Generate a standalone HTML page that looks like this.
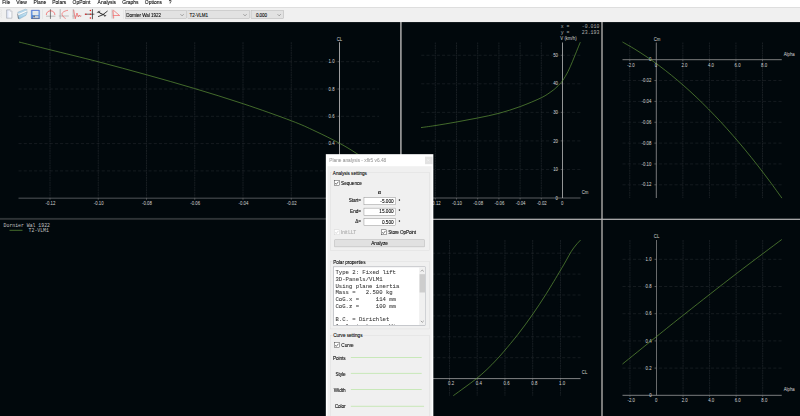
<!DOCTYPE html>
<html><head><meta charset="utf-8"><title>xflr5 v6.48</title>
<style>
html,body{margin:0;padding:0;overflow:hidden;}
body{width:800px;height:416px;overflow:hidden;background:#01080c;font-family:"Liberation Sans", "DejaVu Sans", sans-serif;position:relative;}
#g{position:absolute;left:0;top:0;}
#g text{font-family:"Liberation Sans", "DejaVu Sans", sans-serif;}
#g text.m{font-family:"Liberation Mono", "DejaVu Sans Mono", monospace;letter-spacing:0;}

#ui{position:absolute;left:0;top:0;width:1920px;height:998.4px;transform:scale(0.4166667);transform-origin:0 0;font-size:11.3px;color:#000;-webkit-text-stroke-width:0.18px;}
#ui .a{position:absolute;}
#ui .t{position:absolute;white-space:nowrap;line-height:16px;height:16px;letter-spacing:-0.15px;}
#ui .gb{position:absolute;border:1px solid #dadada;box-sizing:border-box;}
#ui .fld{position:absolute;background:#fff;border:1px solid #7a7a7a;box-sizing:border-box;text-align:right;line-height:16.6px;padding-right:4px;}
#ui .cb{position:absolute;width:13px;height:13px;background:#fff;border:1px solid #333;box-sizing:border-box;}
#ui .cb svg{position:absolute;left:-1px;top:-1px;}
#ui .btn{position:absolute;background:#e1e1e1;border:1px solid #adadad;box-sizing:border-box;text-align:center;line-height:17.8px;}
#ui .combo{position:absolute;background:#e2e2e2;border:1px solid #adadad;box-sizing:border-box;line-height:21.5px;white-space:nowrap;letter-spacing:-0.12px;font-size:11px;}
#ui .combo .arr{position:absolute;right:5px;top:7px;left:auto;}
#ui .mono{font-family:"Liberation Mono","DejaVu Sans Mono",monospace;font-size:13.45px;line-height:16.1px;color:#3a3a3a;white-space:pre;}

</style></head><body>
<svg id="g" width="800" height="416" viewBox="0 0 800 416">
<rect x="0" y="21.6" width="800" height="395" fill="#01080c"/>
<line x1="291.25" y1="42.20" x2="291.25" y2="198.20" stroke="#282e32" stroke-width="0.6" stroke-dasharray="1.9 0.55"/>
<line x1="243.00" y1="42.20" x2="243.00" y2="198.20" stroke="#282e32" stroke-width="0.6" stroke-dasharray="1.9 0.55"/>
<line x1="194.75" y1="42.20" x2="194.75" y2="198.20" stroke="#282e32" stroke-width="0.6" stroke-dasharray="1.9 0.55"/>
<line x1="146.50" y1="42.20" x2="146.50" y2="198.20" stroke="#282e32" stroke-width="0.6" stroke-dasharray="1.9 0.55"/>
<line x1="98.25" y1="42.20" x2="98.25" y2="198.20" stroke="#282e32" stroke-width="0.6" stroke-dasharray="1.9 0.55"/>
<line x1="50.00" y1="42.20" x2="50.00" y2="198.20" stroke="#282e32" stroke-width="0.6" stroke-dasharray="1.9 0.55"/>
<line x1="18.50" y1="170.90" x2="379.00" y2="170.90" stroke="#23292d" stroke-width="0.6" stroke-dasharray="3.1 2.1"/>
<line x1="18.50" y1="143.60" x2="379.00" y2="143.60" stroke="#23292d" stroke-width="0.6" stroke-dasharray="3.1 2.1"/>
<line x1="18.50" y1="116.30" x2="379.00" y2="116.30" stroke="#23292d" stroke-width="0.6" stroke-dasharray="3.1 2.1"/>
<line x1="18.50" y1="89.00" x2="379.00" y2="89.00" stroke="#23292d" stroke-width="0.6" stroke-dasharray="3.1 2.1"/>
<line x1="18.50" y1="61.70" x2="379.00" y2="61.70" stroke="#23292d" stroke-width="0.6" stroke-dasharray="3.1 2.1"/>
<line x1="18.50" y1="198.20" x2="379.00" y2="198.20" stroke="#363b3f" stroke-width="1.5"/>
<line x1="339.50" y1="42.20" x2="339.50" y2="198.20" stroke="#b0b0b0" stroke-width="0.9"/>
<line x1="291.25" y1="198.20" x2="291.25" y2="199.80" stroke="#8a8a8a" stroke-width="0.5"/>
<line x1="243.00" y1="198.20" x2="243.00" y2="199.80" stroke="#8a8a8a" stroke-width="0.5"/>
<line x1="194.75" y1="198.20" x2="194.75" y2="199.80" stroke="#8a8a8a" stroke-width="0.5"/>
<line x1="146.50" y1="198.20" x2="146.50" y2="199.80" stroke="#8a8a8a" stroke-width="0.5"/>
<line x1="98.25" y1="198.20" x2="98.25" y2="199.80" stroke="#8a8a8a" stroke-width="0.5"/>
<line x1="50.00" y1="198.20" x2="50.00" y2="199.80" stroke="#8a8a8a" stroke-width="0.5"/>
<line x1="337.70" y1="170.90" x2="339.50" y2="170.90" stroke="#8a8a8a" stroke-width="0.5"/>
<line x1="337.70" y1="143.60" x2="339.50" y2="143.60" stroke="#8a8a8a" stroke-width="0.5"/>
<line x1="337.70" y1="116.30" x2="339.50" y2="116.30" stroke="#8a8a8a" stroke-width="0.5"/>
<line x1="337.70" y1="89.00" x2="339.50" y2="89.00" stroke="#8a8a8a" stroke-width="0.5"/>
<line x1="337.70" y1="61.70" x2="339.50" y2="61.70" stroke="#8a8a8a" stroke-width="0.5"/>
<text transform="translate(291.75 204.75) scale(0.88 1)" font-size="4.9" text-anchor="middle" fill="#d8d8d8">-0.02</text>
<text transform="translate(243.50 204.75) scale(0.88 1)" font-size="4.9" text-anchor="middle" fill="#d8d8d8">-0.04</text>
<text transform="translate(195.25 204.75) scale(0.88 1)" font-size="4.9" text-anchor="middle" fill="#d8d8d8">-0.06</text>
<text transform="translate(147.00 204.75) scale(0.88 1)" font-size="4.9" text-anchor="middle" fill="#d8d8d8">-0.08</text>
<text transform="translate(98.75 204.75) scale(0.88 1)" font-size="4.9" text-anchor="middle" fill="#d8d8d8">-0.10</text>
<text transform="translate(50.50 204.75) scale(0.88 1)" font-size="4.9" text-anchor="middle" fill="#d8d8d8">-0.12</text>
<text transform="translate(334.60 172.50) scale(0.88 1)" font-size="4.9" text-anchor="end" fill="#d8d8d8">0.2</text>
<text transform="translate(334.60 145.20) scale(0.88 1)" font-size="4.9" text-anchor="end" fill="#d8d8d8">0.4</text>
<text transform="translate(334.60 117.90) scale(0.88 1)" font-size="4.9" text-anchor="end" fill="#d8d8d8">0.6</text>
<text transform="translate(334.60 90.60) scale(0.88 1)" font-size="4.9" text-anchor="end" fill="#d8d8d8">0.8</text>
<text transform="translate(334.60 63.30) scale(0.88 1)" font-size="4.9" text-anchor="end" fill="#d8d8d8">1.0</text>
<text transform="translate(339.40 40.50) scale(0.88 1)" font-size="4.9" text-anchor="middle" fill="#d8d8d8">CL</text>
<path d="M19.00,42.00 C24.17,43.29 36.79,46.46 50.00,49.75 C63.21,53.04 82.17,57.58 98.25,61.75 C114.33,65.92 130.46,70.29 146.50,74.75 C162.54,79.21 178.38,83.67 194.50,88.50 C210.62,93.33 227.12,98.38 243.25,103.75 C259.38,109.12 279.29,116.21 291.25,120.75 C303.21,125.29 306.96,127.25 315.00,131.00 C323.04,134.75 332.62,139.54 339.50,143.25 C346.38,146.96 349.67,148.96 356.25,153.25 C362.83,157.54 375.21,166.38 379.00,169.00" fill="none" stroke="#62983a" stroke-width="0.68"/>
<line x1="541.30" y1="42.50" x2="541.30" y2="198.00" stroke="#282e32" stroke-width="0.6" stroke-dasharray="1.9 0.55"/>
<line x1="520.10" y1="42.50" x2="520.10" y2="198.00" stroke="#282e32" stroke-width="0.6" stroke-dasharray="1.9 0.55"/>
<line x1="498.90" y1="42.50" x2="498.90" y2="198.00" stroke="#282e32" stroke-width="0.6" stroke-dasharray="1.9 0.55"/>
<line x1="477.70" y1="42.50" x2="477.70" y2="198.00" stroke="#282e32" stroke-width="0.6" stroke-dasharray="1.9 0.55"/>
<line x1="456.50" y1="42.50" x2="456.50" y2="198.00" stroke="#282e32" stroke-width="0.6" stroke-dasharray="1.9 0.55"/>
<line x1="435.30" y1="42.50" x2="435.30" y2="198.00" stroke="#282e32" stroke-width="0.6" stroke-dasharray="1.9 0.55"/>
<line x1="421.25" y1="169.45" x2="580.50" y2="169.45" stroke="#23292d" stroke-width="0.6" stroke-dasharray="3.1 2.1"/>
<line x1="421.25" y1="140.90" x2="580.50" y2="140.90" stroke="#23292d" stroke-width="0.6" stroke-dasharray="3.1 2.1"/>
<line x1="421.25" y1="112.35" x2="580.50" y2="112.35" stroke="#23292d" stroke-width="0.6" stroke-dasharray="3.1 2.1"/>
<line x1="421.25" y1="83.80" x2="580.50" y2="83.80" stroke="#23292d" stroke-width="0.6" stroke-dasharray="3.1 2.1"/>
<line x1="421.25" y1="55.25" x2="580.50" y2="55.25" stroke="#23292d" stroke-width="0.6" stroke-dasharray="3.1 2.1"/>
<line x1="421.25" y1="198.00" x2="580.50" y2="198.00" stroke="#3c4144" stroke-width="1.5"/>
<line x1="562.50" y1="42.50" x2="562.50" y2="198.00" stroke="#c4c4c4" stroke-width="0.75"/>
<line x1="541.30" y1="198.00" x2="541.30" y2="199.60" stroke="#8a8a8a" stroke-width="0.5"/>
<line x1="520.10" y1="198.00" x2="520.10" y2="199.60" stroke="#8a8a8a" stroke-width="0.5"/>
<line x1="498.90" y1="198.00" x2="498.90" y2="199.60" stroke="#8a8a8a" stroke-width="0.5"/>
<line x1="477.70" y1="198.00" x2="477.70" y2="199.60" stroke="#8a8a8a" stroke-width="0.5"/>
<line x1="456.50" y1="198.00" x2="456.50" y2="199.60" stroke="#8a8a8a" stroke-width="0.5"/>
<line x1="435.30" y1="198.00" x2="435.30" y2="199.60" stroke="#8a8a8a" stroke-width="0.5"/>
<line x1="560.70" y1="169.45" x2="562.50" y2="169.45" stroke="#8a8a8a" stroke-width="0.5"/>
<line x1="560.70" y1="140.90" x2="562.50" y2="140.90" stroke="#8a8a8a" stroke-width="0.5"/>
<line x1="560.70" y1="112.35" x2="562.50" y2="112.35" stroke="#8a8a8a" stroke-width="0.5"/>
<line x1="560.70" y1="83.80" x2="562.50" y2="83.80" stroke="#8a8a8a" stroke-width="0.5"/>
<line x1="560.70" y1="55.25" x2="562.50" y2="55.25" stroke="#8a8a8a" stroke-width="0.5"/>
<text transform="translate(541.80 204.85) scale(0.88 1)" font-size="4.9" text-anchor="middle" fill="#d8d8d8">-0.02</text>
<text transform="translate(520.60 204.85) scale(0.88 1)" font-size="4.9" text-anchor="middle" fill="#d8d8d8">-0.04</text>
<text transform="translate(499.40 204.85) scale(0.88 1)" font-size="4.9" text-anchor="middle" fill="#d8d8d8">-0.06</text>
<text transform="translate(478.20 204.85) scale(0.88 1)" font-size="4.9" text-anchor="middle" fill="#d8d8d8">-0.08</text>
<text transform="translate(457.00 204.85) scale(0.88 1)" font-size="4.9" text-anchor="middle" fill="#d8d8d8">-0.10</text>
<text transform="translate(435.80 204.85) scale(0.88 1)" font-size="4.9" text-anchor="middle" fill="#d8d8d8">-0.12</text>
<text transform="translate(562.10 204.85) scale(0.88 1)" font-size="4.9" text-anchor="middle" fill="#d8d8d8">0</text>
<text transform="translate(558.00 171.05) scale(0.88 1)" font-size="4.9" text-anchor="end" fill="#d8d8d8">10</text>
<text transform="translate(558.00 142.50) scale(0.88 1)" font-size="4.9" text-anchor="end" fill="#d8d8d8">20</text>
<text transform="translate(558.00 113.95) scale(0.88 1)" font-size="4.9" text-anchor="end" fill="#d8d8d8">30</text>
<text transform="translate(558.00 85.40) scale(0.88 1)" font-size="4.9" text-anchor="end" fill="#d8d8d8">40</text>
<text transform="translate(558.00 56.85) scale(0.88 1)" font-size="4.9" text-anchor="end" fill="#d8d8d8">50</text>
<text transform="translate(558.00 199.60) scale(0.88 1)" font-size="4.9" text-anchor="end" fill="#d8d8d8">0</text>
<text transform="translate(585.10 193.70) scale(0.88 1)" font-size="4.9" text-anchor="middle" fill="#d8d8d8">Cm</text>
<text transform="translate(568.50 40.00) scale(0.88 1)" font-size="4.9" text-anchor="middle" fill="#d8d8d8">V (km/h)</text>
<path d="M421.00,127.60 C423.33,127.27 429.10,126.53 435.00,125.60 C440.90,124.67 449.30,123.27 456.40,122.00 C463.50,120.73 470.50,119.45 477.60,118.00 C484.70,116.55 491.87,115.22 499.00,113.30 C506.13,111.38 513.30,109.12 520.40,106.50 C527.50,103.88 536.33,100.18 541.60,97.60 C546.87,95.02 549.43,92.80 552.00,91.00 C554.57,89.20 555.25,88.50 557.00,86.80 C558.75,85.10 560.67,83.35 562.50,80.80 C564.33,78.25 566.33,74.73 568.00,71.50 C569.67,68.27 571.08,64.73 572.50,61.40 C573.92,58.07 575.20,54.70 576.50,51.50 C577.80,48.30 579.67,43.75 580.30,42.20" fill="none" stroke="#62983a" stroke-width="0.68"/>
<text class="m" x="560.75" y="28.00" font-size="4.85" text-anchor="start" fill="#b0b0b0">x =</text>
<text class="m" x="599.30" y="28.00" font-size="4.85" text-anchor="end" fill="#b0b0b0">-0.010</text>
<text class="m" x="560.75" y="34.20" font-size="4.85" text-anchor="start" fill="#b0b0b0">y =</text>
<text class="m" x="599.30" y="34.20" font-size="4.85" text-anchor="end" fill="#b0b0b0">23.193</text>
<line x1="629.75" y1="42.50" x2="629.75" y2="198.00" stroke="#282e32" stroke-width="0.6" stroke-dasharray="1.9 0.55"/>
<line x1="682.85" y1="42.50" x2="682.85" y2="198.00" stroke="#282e32" stroke-width="0.6" stroke-dasharray="1.9 0.55"/>
<line x1="709.40" y1="42.50" x2="709.40" y2="198.00" stroke="#282e32" stroke-width="0.6" stroke-dasharray="1.9 0.55"/>
<line x1="735.95" y1="42.50" x2="735.95" y2="198.00" stroke="#282e32" stroke-width="0.6" stroke-dasharray="1.9 0.55"/>
<line x1="762.50" y1="42.50" x2="762.50" y2="198.00" stroke="#282e32" stroke-width="0.6" stroke-dasharray="1.9 0.55"/>
<line x1="622.50" y1="80.55" x2="781.75" y2="80.55" stroke="#23292d" stroke-width="0.6" stroke-dasharray="3.1 2.1"/>
<line x1="622.50" y1="101.40" x2="781.75" y2="101.40" stroke="#23292d" stroke-width="0.6" stroke-dasharray="3.1 2.1"/>
<line x1="622.50" y1="122.25" x2="781.75" y2="122.25" stroke="#23292d" stroke-width="0.6" stroke-dasharray="3.1 2.1"/>
<line x1="622.50" y1="143.10" x2="781.75" y2="143.10" stroke="#23292d" stroke-width="0.6" stroke-dasharray="3.1 2.1"/>
<line x1="622.50" y1="163.95" x2="781.75" y2="163.95" stroke="#23292d" stroke-width="0.6" stroke-dasharray="3.1 2.1"/>
<line x1="622.50" y1="184.80" x2="781.75" y2="184.80" stroke="#23292d" stroke-width="0.6" stroke-dasharray="3.1 2.1"/>
<line x1="622.50" y1="59.70" x2="781.75" y2="59.70" stroke="#8a8a8a" stroke-width="0.9"/>
<line x1="656.30" y1="42.50" x2="656.30" y2="198.00" stroke="#959595" stroke-width="0.8"/>
<line x1="629.75" y1="59.70" x2="629.75" y2="61.30" stroke="#8a8a8a" stroke-width="0.5"/>
<line x1="682.85" y1="59.70" x2="682.85" y2="61.30" stroke="#8a8a8a" stroke-width="0.5"/>
<line x1="709.40" y1="59.70" x2="709.40" y2="61.30" stroke="#8a8a8a" stroke-width="0.5"/>
<line x1="735.95" y1="59.70" x2="735.95" y2="61.30" stroke="#8a8a8a" stroke-width="0.5"/>
<line x1="762.50" y1="59.70" x2="762.50" y2="61.30" stroke="#8a8a8a" stroke-width="0.5"/>
<line x1="654.50" y1="80.55" x2="656.30" y2="80.55" stroke="#8a8a8a" stroke-width="0.5"/>
<line x1="654.50" y1="101.40" x2="656.30" y2="101.40" stroke="#8a8a8a" stroke-width="0.5"/>
<line x1="654.50" y1="122.25" x2="656.30" y2="122.25" stroke="#8a8a8a" stroke-width="0.5"/>
<line x1="654.50" y1="143.10" x2="656.30" y2="143.10" stroke="#8a8a8a" stroke-width="0.5"/>
<line x1="654.50" y1="163.95" x2="656.30" y2="163.95" stroke="#8a8a8a" stroke-width="0.5"/>
<line x1="654.50" y1="184.80" x2="656.30" y2="184.80" stroke="#8a8a8a" stroke-width="0.5"/>
<text transform="translate(631.05 66.85) scale(0.88 1)" font-size="4.9" text-anchor="middle" fill="#d8d8d8">-2.0</text>
<text transform="translate(655.90 66.85) scale(0.88 1)" font-size="4.9" text-anchor="middle" fill="#d8d8d8">0</text>
<text transform="translate(684.45 66.85) scale(0.88 1)" font-size="4.9" text-anchor="middle" fill="#d8d8d8">2.0</text>
<text transform="translate(711.00 66.85) scale(0.88 1)" font-size="4.9" text-anchor="middle" fill="#d8d8d8">4.0</text>
<text transform="translate(737.55 66.85) scale(0.88 1)" font-size="4.9" text-anchor="middle" fill="#d8d8d8">6.0</text>
<text transform="translate(764.10 66.85) scale(0.88 1)" font-size="4.9" text-anchor="middle" fill="#d8d8d8">8.0</text>
<text transform="translate(651.40 61.30) scale(0.88 1)" font-size="4.9" text-anchor="end" fill="#d8d8d8">0</text>
<text transform="translate(651.40 82.15) scale(0.88 1)" font-size="4.9" text-anchor="end" fill="#d8d8d8">-0.02</text>
<text transform="translate(651.40 103.00) scale(0.88 1)" font-size="4.9" text-anchor="end" fill="#d8d8d8">-0.04</text>
<text transform="translate(651.40 123.85) scale(0.88 1)" font-size="4.9" text-anchor="end" fill="#d8d8d8">-0.06</text>
<text transform="translate(651.40 144.70) scale(0.88 1)" font-size="4.9" text-anchor="end" fill="#d8d8d8">-0.08</text>
<text transform="translate(651.40 165.55) scale(0.88 1)" font-size="4.9" text-anchor="end" fill="#d8d8d8">-0.10</text>
<text transform="translate(651.40 186.40) scale(0.88 1)" font-size="4.9" text-anchor="end" fill="#d8d8d8">-0.12</text>
<text transform="translate(789.20 55.80) scale(0.88 1)" font-size="4.9" text-anchor="middle" fill="#d8d8d8">Alpha</text>
<text transform="translate(657.00 40.50) scale(0.88 1)" font-size="4.9" text-anchor="middle" fill="#d8d8d8">Cm</text>
<path d="M622.50,42.00 C624.54,43.19 630.67,46.61 634.76,49.12 C638.85,51.63 642.93,54.27 647.02,57.05 C651.11,59.83 655.19,62.75 659.28,65.80 C663.37,68.85 667.46,72.04 671.55,75.36 C675.64,78.68 679.72,82.14 683.81,85.74 C687.90,89.33 691.98,93.06 696.07,96.93 C700.16,100.80 704.24,104.80 708.33,108.94 C712.42,113.08 716.50,117.35 720.59,121.76 C724.68,126.17 728.76,130.72 732.85,135.40 C736.94,140.08 741.03,144.90 745.12,149.85 C749.21,154.80 753.29,159.90 757.38,165.12 C761.47,170.34 765.55,175.70 769.64,181.20 C773.73,186.70 779.86,195.28 781.90,198.10" fill="none" stroke="#62983a" stroke-width="0.68"/>
<line x1="449.45" y1="240.00" x2="449.45" y2="395.70" stroke="#282e32" stroke-width="0.6" stroke-dasharray="1.9 0.55"/>
<line x1="477.20" y1="240.00" x2="477.20" y2="395.70" stroke="#282e32" stroke-width="0.6" stroke-dasharray="1.9 0.55"/>
<line x1="504.95" y1="240.00" x2="504.95" y2="395.70" stroke="#282e32" stroke-width="0.6" stroke-dasharray="1.9 0.55"/>
<line x1="532.70" y1="240.00" x2="532.70" y2="395.70" stroke="#282e32" stroke-width="0.6" stroke-dasharray="1.9 0.55"/>
<line x1="560.45" y1="240.00" x2="560.45" y2="395.70" stroke="#282e32" stroke-width="0.6" stroke-dasharray="1.9 0.55"/>
<line x1="421.70" y1="357.70" x2="580.50" y2="357.70" stroke="#23292d" stroke-width="0.6" stroke-dasharray="3.1 2.1"/>
<line x1="421.70" y1="336.80" x2="580.50" y2="336.80" stroke="#23292d" stroke-width="0.6" stroke-dasharray="3.1 2.1"/>
<line x1="421.70" y1="315.90" x2="580.50" y2="315.90" stroke="#23292d" stroke-width="0.6" stroke-dasharray="3.1 2.1"/>
<line x1="421.70" y1="295.00" x2="580.50" y2="295.00" stroke="#23292d" stroke-width="0.6" stroke-dasharray="3.1 2.1"/>
<line x1="421.70" y1="274.10" x2="580.50" y2="274.10" stroke="#23292d" stroke-width="0.6" stroke-dasharray="3.1 2.1"/>
<line x1="421.70" y1="253.20" x2="580.50" y2="253.20" stroke="#23292d" stroke-width="0.6" stroke-dasharray="3.1 2.1"/>
<line x1="421.70" y1="378.60" x2="580.50" y2="378.60" stroke="#b8b8b8" stroke-width="0.7"/>
<line x1="421.70" y1="240.00" x2="421.70" y2="395.70" stroke="#a8a8a8" stroke-width="0.9"/>
<line x1="449.45" y1="378.60" x2="449.45" y2="380.20" stroke="#8a8a8a" stroke-width="0.5"/>
<line x1="477.20" y1="378.60" x2="477.20" y2="380.20" stroke="#8a8a8a" stroke-width="0.5"/>
<line x1="504.95" y1="378.60" x2="504.95" y2="380.20" stroke="#8a8a8a" stroke-width="0.5"/>
<line x1="532.70" y1="378.60" x2="532.70" y2="380.20" stroke="#8a8a8a" stroke-width="0.5"/>
<line x1="560.45" y1="378.60" x2="560.45" y2="380.20" stroke="#8a8a8a" stroke-width="0.5"/>
<line x1="419.90" y1="357.70" x2="421.70" y2="357.70" stroke="#8a8a8a" stroke-width="0.5"/>
<line x1="419.90" y1="336.80" x2="421.70" y2="336.80" stroke="#8a8a8a" stroke-width="0.5"/>
<line x1="419.90" y1="315.90" x2="421.70" y2="315.90" stroke="#8a8a8a" stroke-width="0.5"/>
<line x1="419.90" y1="295.00" x2="421.70" y2="295.00" stroke="#8a8a8a" stroke-width="0.5"/>
<line x1="419.90" y1="274.10" x2="421.70" y2="274.10" stroke="#8a8a8a" stroke-width="0.5"/>
<line x1="419.90" y1="253.20" x2="421.70" y2="253.20" stroke="#8a8a8a" stroke-width="0.5"/>
<text transform="translate(451.05 385.05) scale(0.88 1)" font-size="4.9" text-anchor="middle" fill="#d8d8d8">0.2</text>
<text transform="translate(478.80 385.05) scale(0.88 1)" font-size="4.9" text-anchor="middle" fill="#d8d8d8">0.4</text>
<text transform="translate(506.55 385.05) scale(0.88 1)" font-size="4.9" text-anchor="middle" fill="#d8d8d8">0.6</text>
<text transform="translate(534.30 385.05) scale(0.88 1)" font-size="4.9" text-anchor="middle" fill="#d8d8d8">0.8</text>
<text transform="translate(562.05 385.05) scale(0.88 1)" font-size="4.9" text-anchor="middle" fill="#d8d8d8">1.0</text>
<text transform="translate(584.60 374.00) scale(0.88 1)" font-size="4.9" text-anchor="middle" fill="#d8d8d8">CL</text>
<path d="M453.30,395.70 C455.25,394.28 461.13,390.05 465.00,387.20 C468.87,384.35 472.83,381.57 476.50,378.60 C480.17,375.63 483.71,372.50 487.00,369.40 C490.29,366.30 493.42,363.02 496.25,360.00 C499.08,356.98 500.38,355.58 504.00,351.30 C507.62,347.02 513.30,340.35 518.00,334.30 C522.70,328.25 527.49,321.75 532.20,315.00 C536.91,308.25 541.57,301.20 546.25,293.80 C550.93,286.40 557.01,276.10 560.30,270.60 C563.59,265.10 564.17,263.98 566.00,260.80 C567.83,257.62 569.58,254.13 571.25,251.50 C572.92,248.87 574.44,246.92 576.00,245.00 C577.56,243.08 579.83,240.83 580.60,240.00" fill="none" stroke="#62983a" stroke-width="0.68"/>
<line x1="629.95" y1="240.00" x2="629.95" y2="395.30" stroke="#282e32" stroke-width="0.6" stroke-dasharray="1.9 0.55"/>
<line x1="683.05" y1="240.00" x2="683.05" y2="395.30" stroke="#282e32" stroke-width="0.6" stroke-dasharray="1.9 0.55"/>
<line x1="709.60" y1="240.00" x2="709.60" y2="395.30" stroke="#282e32" stroke-width="0.6" stroke-dasharray="1.9 0.55"/>
<line x1="736.15" y1="240.00" x2="736.15" y2="395.30" stroke="#282e32" stroke-width="0.6" stroke-dasharray="1.9 0.55"/>
<line x1="762.70" y1="240.00" x2="762.70" y2="395.30" stroke="#282e32" stroke-width="0.6" stroke-dasharray="1.9 0.55"/>
<line x1="622.50" y1="368.10" x2="781.75" y2="368.10" stroke="#23292d" stroke-width="0.6" stroke-dasharray="3.1 2.1"/>
<line x1="622.50" y1="340.90" x2="781.75" y2="340.90" stroke="#23292d" stroke-width="0.6" stroke-dasharray="3.1 2.1"/>
<line x1="622.50" y1="313.70" x2="781.75" y2="313.70" stroke="#23292d" stroke-width="0.6" stroke-dasharray="3.1 2.1"/>
<line x1="622.50" y1="286.50" x2="781.75" y2="286.50" stroke="#23292d" stroke-width="0.6" stroke-dasharray="3.1 2.1"/>
<line x1="622.50" y1="259.30" x2="781.75" y2="259.30" stroke="#23292d" stroke-width="0.6" stroke-dasharray="3.1 2.1"/>
<line x1="622.50" y1="395.30" x2="781.75" y2="395.30" stroke="#b0b0b0" stroke-width="0.7"/>
<line x1="656.50" y1="240.00" x2="656.50" y2="395.30" stroke="#929292" stroke-width="0.72"/>
<line x1="629.95" y1="395.30" x2="629.95" y2="396.90" stroke="#8a8a8a" stroke-width="0.5"/>
<line x1="683.05" y1="395.30" x2="683.05" y2="396.90" stroke="#8a8a8a" stroke-width="0.5"/>
<line x1="709.60" y1="395.30" x2="709.60" y2="396.90" stroke="#8a8a8a" stroke-width="0.5"/>
<line x1="736.15" y1="395.30" x2="736.15" y2="396.90" stroke="#8a8a8a" stroke-width="0.5"/>
<line x1="762.70" y1="395.30" x2="762.70" y2="396.90" stroke="#8a8a8a" stroke-width="0.5"/>
<line x1="654.70" y1="368.10" x2="656.50" y2="368.10" stroke="#8a8a8a" stroke-width="0.5"/>
<line x1="654.70" y1="340.90" x2="656.50" y2="340.90" stroke="#8a8a8a" stroke-width="0.5"/>
<line x1="654.70" y1="313.70" x2="656.50" y2="313.70" stroke="#8a8a8a" stroke-width="0.5"/>
<line x1="654.70" y1="286.50" x2="656.50" y2="286.50" stroke="#8a8a8a" stroke-width="0.5"/>
<line x1="654.70" y1="259.30" x2="656.50" y2="259.30" stroke="#8a8a8a" stroke-width="0.5"/>
<text transform="translate(631.25 402.35) scale(0.88 1)" font-size="4.9" text-anchor="middle" fill="#d8d8d8">-2.0</text>
<text transform="translate(656.10 402.35) scale(0.88 1)" font-size="4.9" text-anchor="middle" fill="#d8d8d8">0</text>
<text transform="translate(684.65 402.35) scale(0.88 1)" font-size="4.9" text-anchor="middle" fill="#d8d8d8">2.0</text>
<text transform="translate(711.20 402.35) scale(0.88 1)" font-size="4.9" text-anchor="middle" fill="#d8d8d8">4.0</text>
<text transform="translate(737.75 402.35) scale(0.88 1)" font-size="4.9" text-anchor="middle" fill="#d8d8d8">6.0</text>
<text transform="translate(764.30 402.35) scale(0.88 1)" font-size="4.9" text-anchor="middle" fill="#d8d8d8">8.0</text>
<text transform="translate(651.60 396.90) scale(0.88 1)" font-size="4.9" text-anchor="end" fill="#d8d8d8">0</text>
<text transform="translate(651.60 369.70) scale(0.88 1)" font-size="4.9" text-anchor="end" fill="#d8d8d8">0.2</text>
<text transform="translate(651.60 342.50) scale(0.88 1)" font-size="4.9" text-anchor="end" fill="#d8d8d8">0.4</text>
<text transform="translate(651.60 315.30) scale(0.88 1)" font-size="4.9" text-anchor="end" fill="#d8d8d8">0.6</text>
<text transform="translate(651.60 288.10) scale(0.88 1)" font-size="4.9" text-anchor="end" fill="#d8d8d8">0.8</text>
<text transform="translate(651.60 260.90) scale(0.88 1)" font-size="4.9" text-anchor="end" fill="#d8d8d8">1.0</text>
<text transform="translate(789.20 391.30) scale(0.88 1)" font-size="4.9" text-anchor="middle" fill="#d8d8d8">Alpha</text>
<text transform="translate(656.60 238.00) scale(0.88 1)" font-size="4.9" text-anchor="middle" fill="#d8d8d8">CL</text>
<path d="M622.50,364.00 C628.08,359.50 645.42,345.50 656.00,337.00 C666.58,328.50 672.62,323.54 686.00,313.00 C699.38,302.46 720.29,286.00 736.25,273.75 C752.21,261.50 774.17,245.21 781.75,239.50" fill="none" stroke="#62983a" stroke-width="0.68"/>
<text class="m" x="3.60" y="226.70" font-size="4.83" text-anchor="start" fill="#c4c4c4">Dornier Wal 1922</text>
<line x1="9.50" y1="230.30" x2="22.50" y2="230.30" stroke="#62983a" stroke-width="0.7"/>
<text class="m" x="28.60" y="232.20" font-size="4.83" text-anchor="start" fill="#c4c4c4">T2-VLM1</text>
<rect x="400.1" y="22" width="1.6" height="394" fill="#a2a2a2"/>
<rect x="601.15" y="22" width="1.7" height="394" fill="#8e8e8e"/>
<rect x="401.4" y="218.7" width="398.6" height="1.2" fill="#b8b8b8"/>
<rect x="0" y="217.9" width="400.2" height="1.9" fill="#2e3336"/>
</svg>
<div id="ui">
<div class="a" style="left:0.00px;top:0.00px;width:1920.00px;height:17.04px;background:#fff;"></div>
<div class="t" style="top:-1.52px;left:5.52px;font-size:11.9px;letter-spacing:0;">File</div>
<div class="t" style="top:-1.52px;left:39.12px;font-size:11.9px;letter-spacing:0;">View</div>
<div class="t" style="top:-1.52px;left:80.40px;font-size:11.9px;letter-spacing:0;">Plane</div>
<div class="t" style="top:-1.52px;left:125.52px;font-size:11.9px;letter-spacing:0;">Polars</div>
<div class="t" style="top:-1.52px;left:174.24px;font-size:11.9px;letter-spacing:0;">OpPoint</div>
<div class="t" style="top:-1.52px;left:234.24px;font-size:11.9px;letter-spacing:0;">Analysis</div>
<div class="t" style="top:-1.52px;left:293.52px;font-size:11.9px;letter-spacing:0;">Graphs</div>
<div class="t" style="top:-1.52px;left:347.52px;font-size:11.9px;letter-spacing:0;">Options</div>
<div class="t" style="top:-1.52px;left:404.88px;font-size:11.9px;letter-spacing:0;">?</div>
<div class="a" style="left:0.00px;top:17.04px;width:1920.00px;height:35.76px;background:#f0f0f0;"></div>
<!--ICONS-->
<div class="combo" style="left:300.72px;top:24.72px;width:147.12px;height:20.16px;padding-left:1.4px;">Dornier Wal 1922<svg class="arr" width="10" height="6" viewBox="0 0 10 6"><path d="M1,1 L5,5 L9,1" fill="none" stroke="#555" stroke-width="1.1"/></svg></div>
<div class="combo" style="left:450.24px;top:24.72px;width:148.56px;height:20.16px;padding-left:3.6px;">T2-VLM1<svg class="arr" width="10" height="6" viewBox="0 0 10 6"><path d="M1,1 L5,5 L9,1" fill="none" stroke="#555" stroke-width="1.1"/></svg></div>
<div class="combo" style="left:602.16px;top:24.72px;width:78.48px;height:20.16px;padding-left:11.0px;">0.000<svg class="arr" width="10" height="6" viewBox="0 0 10 6"><path d="M1,1 L5,5 L9,1" fill="none" stroke="#555" stroke-width="1.1"/></svg></div>
<div class="a" style="left:782.16px;top:369.60px;width:258.24px;height:631.20px;background:#fff;"></div>
<div class="a" style="left:785.52px;top:398.64px;width:250.32px;height:602.16px;background:#f0f0f0;"></div>
<div class="t" style="top:376.96px;left:790.32px;color:#9c9c9c;font-size:11.45px;letter-spacing:0;">Plane analysis - xflr5 v6.48</div>
<div class="a" style="left:1020.48px;top:376.32px;width:18.00px;height:17.28px;background:#e2e2e2;"><svg width="16" height="17" viewBox="0 0 16 17" style="position:absolute;left:0;top:0"><path d="M5,5.5 L11,11.5 M11,5.5 L5,11.5" stroke="#f8f8f8" stroke-width="1.2"/></svg></div>
<div class="gb" style="left:791.76px;top:413.76px;width:239.52px;height:187.68px;"></div>
<div class="t" style="top:407.92px;left:797.28px;background:#f0f0f0;padding:0 1.5px;">Analysis settings</div>
<div class="cb" style="left:801.60px;top:433.44px;border-color:#262626;"><svg width="13" height="13" viewBox="0 0 13 13"><path d="M2.5,6.5 L5,9.3 L10.3,3" fill="none" stroke="#1a1a1a" stroke-width="1.5"/></svg></div>
<div class="t" style="top:432.88px;left:818.64px;">Sequence</div>
<div class="t" style="top:453.28px;left:760.56px;width:300px;text-align:center;font-weight:bold;">α</div>
<div class="t" style="top:472.96px;left:566.40px;width:300px;text-align:right;">Start=</div>
<div class="fld" style="left:872.88px;top:473.76px;width:77.04px;height:17.76px;">-5.000</div>
<div class="t" style="top:474.64px;left:956.64px;">°</div>
<div class="t" style="top:498.16px;left:566.40px;width:300px;text-align:right;">End=</div>
<div class="fld" style="left:872.88px;top:498.96px;width:77.04px;height:17.76px;">15.000</div>
<div class="t" style="top:499.84px;left:956.64px;">°</div>
<div class="t" style="top:523.36px;left:566.40px;width:300px;text-align:right;">Δ=</div>
<div class="fld" style="left:872.88px;top:524.16px;width:77.04px;height:17.76px;">0.500</div>
<div class="t" style="top:525.04px;left:956.64px;">°</div>
<div class="cb" style="left:801.60px;top:551.04px;border-color:#cccccc;"><svg width="13" height="13" viewBox="0 0 13 13"><path d="M2.5,6.5 L5,9.3 L10.3,3" fill="none" stroke="#c4c4c4" stroke-width="1.5"/></svg></div>
<div class="t" style="top:549.28px;left:818.64px;color:#a8a8a8;">Init LLT</div>
<div class="cb" style="left:915.12px;top:551.04px;border-color:#262626;"><svg width="13" height="13" viewBox="0 0 13 13"><path d="M2.5,6.5 L5,9.3 L10.3,3" fill="none" stroke="#1a1a1a" stroke-width="1.5"/></svg></div>
<div class="t" style="top:549.28px;left:931.92px;letter-spacing:-0.35px;">Store OpPoint</div>
<div class="btn" style="left:802.56px;top:574.56px;width:216.72px;height:18.72px;">Analyze</div>
<div class="gb" style="left:791.76px;top:627.12px;width:239.52px;height:163.20px;"></div>
<div class="t" style="top:621.28px;left:798.24px;background:#f0f0f0;padding:0 1.5px;">Polar properties</div>
<div class="a" style="left:799.68px;top:639.84px;width:222.48px;height:141.60px;background:#fff;border:1px solid #828790;box-sizing:border-box;overflow:hidden;"><div class="mono" style="position:absolute;left:4.5px;top:6.2px;">Type 2: Fixed lift
3D-Panels/VLM1
Using plane inertia
Mass =   2.500 kg
CoG.x =     114 mm
CoG.z =     100 mm

B.C. = Dirichlet
Analysis type = Viscous</div><div style="position:absolute;right:0;top:0;width:15px;height:100%;background:#f0f0f0;"><div style="position:absolute;left:1px;top:17px;width:13px;height:44px;background:#cdcdcd;"></div><svg width="15" height="140" viewBox="0 0 15 140" style="position:absolute;left:0;top:0"><path d="M4,10.5 L7.5,7 L11,10.5 M4,129 L7.5,132.5 L11,129" fill="none" stroke="#555" stroke-width="1.2"/></svg></div></div>
<div class="gb" style="left:791.76px;top:803.52px;width:239.52px;height:204.48px;"></div>
<div class="t" style="top:796.48px;left:798.24px;background:#f0f0f0;padding:0 1.5px;">Curve settings</div>
<div class="cb" style="left:801.60px;top:821.76px;border-color:#262626;"><svg width="13" height="13" viewBox="0 0 13 13"><path d="M2.5,6.5 L5,9.3 L10.3,3" fill="none" stroke="#1a1a1a" stroke-width="1.5"/></svg></div>
<div class="t" style="top:820.48px;left:819.12px;">Curve</div>
<div class="t" style="top:852.16px;left:529.44px;width:300px;text-align:right;">Points</div>
<div class="a" style="left:841.68px;top:857.28px;width:170.16px;height:1.92px;background:#c0e6ae;"></div>
<div class="t" style="top:890.32px;left:529.44px;width:300px;text-align:right;">Style</div>
<div class="a" style="left:841.68px;top:895.44px;width:170.16px;height:1.92px;background:#c0e6ae;"></div>
<div class="t" style="top:928.72px;left:529.44px;width:300px;text-align:right;">Width</div>
<div class="a" style="left:841.68px;top:933.84px;width:170.16px;height:1.92px;background:#c0e6ae;"></div>
<div class="t" style="top:967.12px;left:529.44px;width:300px;text-align:right;">Color</div>
<div class="a" style="left:841.68px;top:974.16px;width:175.92px;height:1.92px;background:#c0e6ae;"></div>
</div>
<svg id="ic" width="800" height="24" viewBox="0 0 800 24" style="position:absolute;left:0;top:0">
<rect x="0.7" y="9.60" width="0.45" height="0.45" fill="#b8b8b8"/><rect x="1.5" y="10.40" width="0.45" height="0.45" fill="#c4c4c4"/>
<rect x="0.7" y="11.30" width="0.45" height="0.45" fill="#b8b8b8"/><rect x="1.5" y="12.10" width="0.45" height="0.45" fill="#c4c4c4"/>
<rect x="0.7" y="13.00" width="0.45" height="0.45" fill="#b8b8b8"/><rect x="1.5" y="13.80" width="0.45" height="0.45" fill="#c4c4c4"/>
<rect x="0.7" y="14.70" width="0.45" height="0.45" fill="#b8b8b8"/><rect x="1.5" y="15.50" width="0.45" height="0.45" fill="#c4c4c4"/>
<rect x="0.7" y="16.40" width="0.45" height="0.45" fill="#b8b8b8"/><rect x="1.5" y="17.20" width="0.45" height="0.45" fill="#c4c4c4"/>
<defs><linearGradient id="nd" x1="0" y1="0" x2="1" y2="0"><stop offset="0" stop-color="#d5dcf3"/><stop offset="0.5" stop-color="#f3f6fd"/><stop offset="1" stop-color="#ffffff"/></linearGradient><linearGradient id="fo" x1="0" y1="0" x2="0" y2="1"><stop offset="0" stop-color="#d6ecf7"/><stop offset="1" stop-color="#8fc3e2"/></linearGradient><linearGradient id="sv" x1="0" y1="0" x2="0" y2="1"><stop offset="0" stop-color="#6c7fd6"/><stop offset="0.15" stop-color="#5b93e2"/><stop offset="1" stop-color="#4a83d6"/></linearGradient></defs>
<path d="M6.6,9.9 L10.3,9.9 L11.9,11.5 L11.9,18.2 L6.6,18.2 Z" fill="url(#nd)" stroke="#8f949f" stroke-width="0.5"/>
<path d="M10.3,9.9 L10.3,11.5 L11.9,11.5" fill="#f6f8fc" stroke="#a4a9b4" stroke-width="0.35"/>
<path d="M17.7,12.3 L25.4,9.2 L27.3,10.0 L19.2,13.8 Z" fill="#b9dbef" stroke="#7aa3bd" stroke-width="0.4" stroke-linejoin="round"/>
<path d="M18.7,13.7 L26.3,10.5 L26.9,12.1 L19.3,15.6 Z" fill="#ffffff" stroke="#c9d6de" stroke-width="0.25"/>
<path d="M17.3,12.5 L18.5,15.9 L19.1,19.1 L17.9,18.3 Z" fill="#4d5964"/>
<path d="M18.4,15.7 L27.3,11.8 L26.0,15.3 L19.1,19.1 Z" fill="url(#fo)" stroke="#6797b5" stroke-width="0.4" stroke-linejoin="round"/>
<rect x="31.2" y="10.1" width="8.4" height="8.5" rx="0.5" fill="url(#sv)" stroke="#4a72c4" stroke-width="0.35"/>
<rect x="31.2" y="18.2" width="8.4" height="0.55" fill="#3f4668"/>
<rect x="32.5" y="10.9" width="6.0" height="4.1" fill="#eef1f5"/>
<path d="M33.0,12.0 H38.0 M33.0,13.1 H38.0 M33.0,14.2 H38.0" stroke="#c5d0cf" stroke-width="0.35"/>
<rect x="33.0" y="15.6" width="5.5" height="2.5" fill="#c6cdd6"/>
<rect x="33.5" y="15.7" width="1.1" height="1.6" fill="#2f3a55"/>
<rect x="42.3" y="9.4" width="0.4" height="9.6" fill="#d4d4d4"/>
<path d="M46.0,16.2 H55.4" stroke="#8a8a8a" stroke-width="0.5"/>
<path d="M50.45,9.2 V18.9" stroke="#222" stroke-width="0.55"/>
<path d="M46.3,15.0 C46.3,9.4 54.9,9.4 54.9,15.0" fill="none" stroke="#ee2a2a" stroke-width="0.55"/>
<path d="M60.2,9.2 V18.9" stroke="#8f8f8f" stroke-width="0.6"/>
<path d="M58.8,16.0 H68.8" stroke="#a0a0a0" stroke-width="0.6"/>
<path d="M68.0,10.3 C63.5,11.0 61.8,13.0 62.0,14.3 C62.3,16.2 64.0,17.6 65.7,18.5" fill="none" stroke="#ee2a2a" stroke-width="0.5"/>
<path d="M73.2,9.2 V18.9" stroke="#9a9a9a" stroke-width="0.6"/>
<path d="M72.0,16.0 H81.2" stroke="#a8a8a8" stroke-width="0.5"/>
<path d="M73.7,9.8 L75.2,18.8 L77.0,13.0 L78.3,16.9 L79.4,15.1 L80.2,16.3 L81.3,15.9" fill="none" stroke="#ee2a2a" stroke-width="0.5" stroke-linejoin="round"/>
<path d="M92.4,9.2 V19.2" stroke="#111" stroke-width="0.7"/>
<path d="M84.8,14.2 H94.4" stroke="#111" stroke-width="0.6"/>
<circle cx="90.4" cy="10.4" r="0.75" fill="#f01818"/>
<circle cx="85.9" cy="14.2" r="0.75" fill="#f01818"/>
<circle cx="90.4" cy="14.2" r="0.75" fill="#f01818"/>
<circle cx="90.4" cy="18.0" r="0.75" fill="#f01818"/>
<path d="M98.4,16.5 L102.6,14.9 L107.3,11.2" fill="none" stroke="#222" stroke-width="0.85" stroke-linecap="round"/>
<path d="M98.3,11.9 L101.0,13.6 L105.3,15.6" fill="none" stroke="#1c1c1c" stroke-width="1.0" stroke-linecap="round"/>
<path d="M97.2,12.5 L99.9,11.2" fill="none" stroke="#2a2a2a" stroke-width="0.7" stroke-linecap="round"/>
<path d="M104.6,16.6 L106.0,15.2" fill="none" stroke="#333" stroke-width="0.6" stroke-linecap="round"/>
<path d="M112.1,9.5 V18.6" stroke="#a8a8a8" stroke-width="0.6"/>
<path d="M113.6,18.6 L112.9,10.6 L113.6,10.4 L119.6,15.5 L112.8,15.5" fill="none" stroke="#ee2a2a" stroke-width="0.5" stroke-linejoin="round"/>
<path d="M113.3,11.0 L113.9,18.0" fill="none" stroke="#f59a9a" stroke-width="0.5"/>
<rect x="123.3" y="9.4" width="0.4" height="9.6" fill="#d8d8d8"/>
</svg>
</body></html>
